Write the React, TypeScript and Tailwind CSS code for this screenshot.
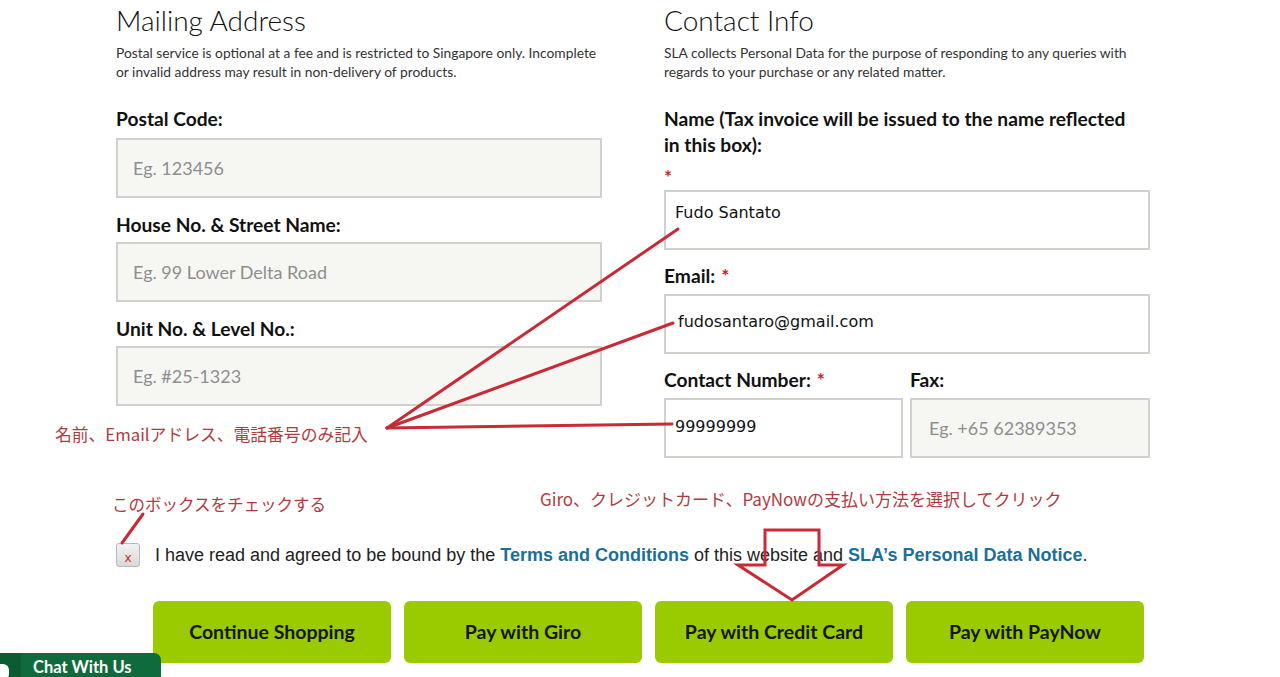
const sans = "font-['Lato','Open_Sans',sans-serif]";
const cjk = "font-['Noto_Sans_CJK_JP',sans-serif]";

function Label({ text, req, className = "" }: { text: string; req?: boolean; className?: string }) {
  return (
    <div className={`text-[19.2px] font-bold leading-[26px] text-[#111] ${className}`}>
      {text}
      {req && <span className="ml-[6px] text-[#c0282d]">*</span>}
    </div>
  );
}

function Placeholder({ text, className = "" }: { text: string; className?: string }) {
  return (
    <div
      className={`h-[60px] border-2 border-[#d0d0cc] bg-[#f6f7f3] flex items-center pl-[15px] text-[18px] text-[#8e8e8e] ${className}`}
    >
      {text}
    </div>
  );
}

function Filled({ text, pt, pl = "pl-[9px]", className = "" }: { text: string; pt: string; pl?: string; className?: string }) {
  return (
    <div
      className={`h-[60px] border-2 border-[#d0d0cc] bg-white ${pt} ${pl} font-['DejaVu_Sans',sans-serif] text-[16px] leading-[22px] text-[#111] ${className}`}
    >
      {text}
    </div>
  );
}

function PayButton({ text }: { text: string }) {
  return (
    <button className="h-[62px] w-[238px] rounded-[6px] bg-[#9acb00] text-[19.5px] font-bold text-[#151515]">
      {text}
    </button>
  );
}

export default function App() {
  return (
    <div className={`relative h-[677px] w-[1280px] overflow-hidden bg-white ${sans}`}>
      <div className="ml-[116px] grid w-[1034px] grid-cols-2 gap-x-[62px] pt-[3px]">
        {/* mailing address */}
        <section>
          <h2 className="text-[28px] font-light leading-[34px] text-[#111]">Mailing Address</h2>
          <p className="mt-[6px] text-[13.8px] leading-[19px] text-[#333]">
            Postal service is optional at a fee and is restricted to Singapore only. Incomplete
            <br />
            or invalid address may result in non-delivery of products.
          </p>
          <Label text="Postal Code:" className="mt-[25px]" />
          <Placeholder text="Eg. 123456" className="mt-[6px]" />
          <Label text="House No. & Street Name:" className="mt-[14px]" />
          <Placeholder text="Eg. 99 Lower Delta Road" className="mt-[4px]" />
          <Label text="Unit No. & Level No.:" className="mt-[14px]" />
          <Placeholder text="Eg. #25-1323" className="mt-[4px]" />
        </section>

        {/* contact info */}
        <section>
          <h2 className="text-[28px] font-light leading-[34px] text-[#111]">Contact Info</h2>
          <p className="mt-[6px] text-[13.8px] leading-[19px] text-[#333]">
            SLA collects Personal Data for the purpose of responding to any queries with
            <br />
            regards to your purchase or any related matter.
          </p>
          <Label text="Name (Tax invoice will be issued to the name reflected" className="mt-[25px]" />
          <Label text="in this box):" />
          <div className="mt-[9px] text-[19px] font-bold leading-[20px] text-[#c0282d]">*</div>
          <Filled text="Fudo Santato" pt="pt-[10px]" className="mt-[3px]" />
          <Label text="Email:" req className="mt-[13px]" />
          <Filled text="fudosantaro@gmail.com" pt="pt-[15px]" pl="pl-[12px]" className="mt-[5px]" />
          <div className="mt-[13px] flex gap-[7px]">
            <div className="w-[239px]">
              <Label text="Contact Number:" req />
              <Filled text="99999999" pt="pt-[16px]" className="mt-[5px]" />
            </div>
            <div className="flex-1">
              <Label text="Fax:" />
              <Placeholder text="Eg. +65 62389353" className="mt-[5px] pl-[17px]" />
            </div>
          </div>
        </section>
      </div>

      {/* terms */}
      <div className="ml-[116px] mt-[84px] flex h-[26px] items-center">
        <div className="flex h-[24px] w-[24px] items-end justify-center rounded-[3px] border border-[#b8b8b8] bg-gradient-to-b from-[#f2f2f2] to-[#d9d9d9] pb-[1px] font-['DejaVu_Sans',sans-serif] text-[12px] leading-[14px] text-[#d02a2a]">
          x
        </div>
        <p className="ml-[15px] font-['Liberation_Sans',sans-serif] text-[18px] text-[#222]">
          I have read and agreed to be bound by the{" "}
          <span className="font-bold text-[#1b6f9a]">Terms and Conditions</span> of this website and{" "}
          <span className="font-bold text-[#1b6f9a]">SLA’s Personal Data Notice</span>.
        </p>
      </div>

      {/* buttons */}
      <div className="ml-[153px] mt-[33px] flex gap-[13px]">
        <PayButton text="Continue Shopping" />
        <PayButton text="Pay with Giro" />
        <PayButton text="Pay with Credit Card" />
        <PayButton text="Pay with PayNow" />
      </div>

      {/* chat tab */}
      <div className="absolute bottom-0 left-0 flex h-[24px] w-[161px] items-end overflow-hidden rounded-tr-[7px] bg-[#0f6b3b]">
        <div className="flex h-full w-[21px] items-end bg-[#0b5c31]">
          <div className="-mb-[3px] -ml-[5px] h-[16px] w-[14px] rounded-[6px] bg-white" />
        </div>
        <span className="ml-[12px] text-[16.5px] font-bold leading-[20px] text-white">Chat With Us</span>
      </div>

      {/* annotations */}
      <svg className="pointer-events-none absolute left-0 top-0" width="1280" height="677">
        <g stroke="#c82a36" strokeWidth="3" strokeLinecap="round" fill="none">
          <line x1="387" y1="428" x2="678" y2="229" />
          <line x1="387" y1="428" x2="673" y2="323" />
          <line x1="387" y1="428" x2="672" y2="424" />
          <line x1="143" y1="514" x2="122" y2="543" />
          <polygon points="765,530 819,530 819,565 843,565 792,600 738,565 765,565" strokeLinejoin="miter" />
        </g>
      </svg>
      <div className={`absolute left-[55px] top-[422px] text-[16.8px] leading-[24px] text-[#b23a3e] ${cjk}`}>
        名前、Emailアドレス、電話番号のみ記入
      </div>
      <div className={`absolute left-[112px] top-[492px] text-[16.5px] leading-[24px] text-[#b23a3e] ${cjk}`}>
        このボックスをチェックする
      </div>
      <div className={`absolute left-[540px] top-[487px] text-[17px] leading-[24px] text-[#b23a3e] ${cjk}`}>
        Giro、クレジットカード、PayNowの支払い方法を選択してクリック
      </div>
    </div>
  );
}
